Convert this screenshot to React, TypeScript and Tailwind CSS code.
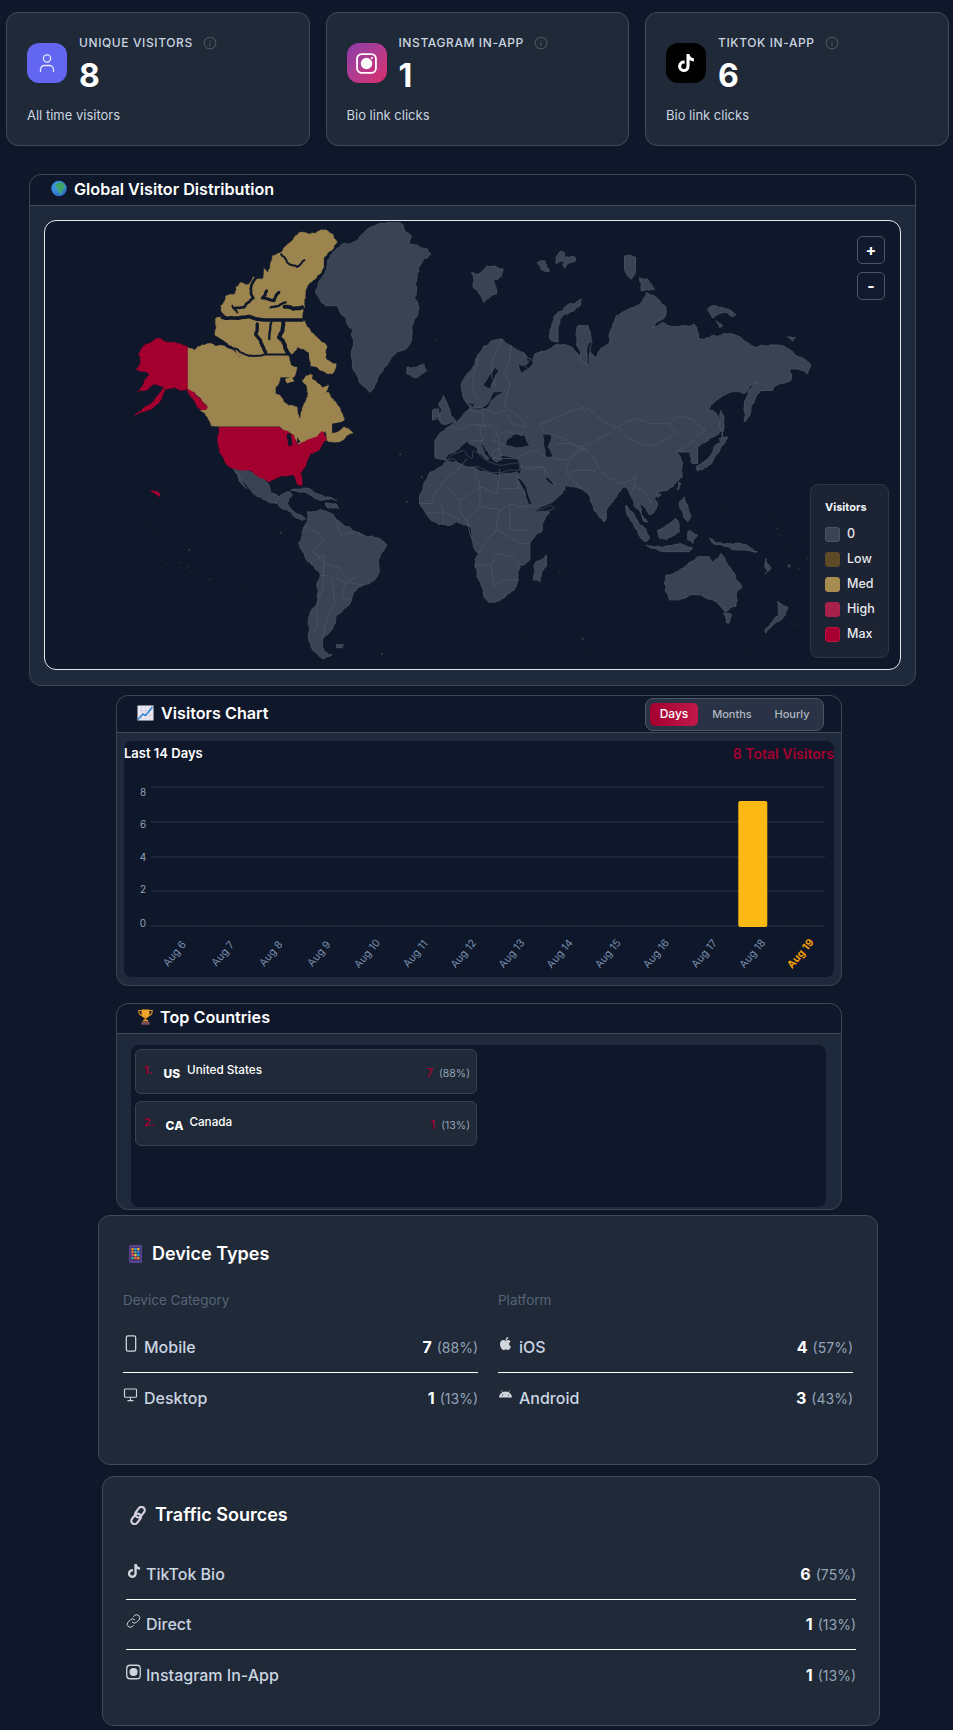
import React from "react";
import { FaApple, FaTiktok } from "react-icons/fa";
import { FaAndroid } from "react-icons/fa6";

const LAND = "#394352";
const LINE = "#4a5565";
const GOLD = "#9c844e";
const RED = "#a3002f";
const BG = "#0f172a";

// Coastlines are subdivided with a repeatable jitter, so they read as coast rather than straight edges.
// Edges that are exactly horizontal or vertical stay straight: those are the map's ruled borders.
function hash(a: number, b: number) {
  const s = Math.sin(a * 12.9898 + b * 78.233) * 43758.5453;
  return s - Math.floor(s);
}
function jitter(x1: number, y1: number, x2: number, y2: number, depth: number, amp: number): number[][] {
  if (depth === 0) return [[x2, y2]];
  const len = Math.hypot(x2 - x1, y2 - y1);
  if (len < 5) return [[x2, y2]];
  const off = (hash(x1 + x2, y1 - y2) - 0.5) * len * amp;
  const mx = (x1 + x2) / 2 - ((y2 - y1) / len) * off;
  const my = (y1 + y2) / 2 + ((x2 - x1) / len) * off;
  return [...jitter(x1, y1, mx, my, depth - 1, amp), ...jitter(mx, my, x2, y2, depth - 1, amp)];
}
function rough(points: string, closed: boolean, amp = 0.28, depth = 4) {
  const pts = points.trim().split(/\s+/).map((p) => p.split(",").map(Number));
  const out: number[][] = [pts[0]];
  const n = closed ? pts.length : pts.length - 1;
  for (let i = 0; i < n; i++) {
    const [x1, y1] = pts[i];
    const [x2, y2] = pts[(i + 1) % pts.length];
    if (x1 === x2 || y1 === y2) out.push([x2, y2]);
    else out.push(...jitter(x1, y1, x2, y2, depth, amp));
  }
  return out.map((p) => `${p[0].toFixed(1)},${p[1].toFixed(1)}`).join(" ");
}

const land = [
  "1070,35 1110,35 1145,75 1135,100 1190,112 1202,130 1165,170 1155,220 1165,300 1145,350 1140,400 1090,435 1050,490 1020,545 990,520 965,470 970,400 945,320 920,285 885,285 855,240 875,200 890,150 935,100 985,85 1005,60",
  "1130,470 1180,460 1190,480 1160,502 1130,490",
  "1325,185 1345,190 1370,165 1420,175 1415,195 1390,210 1400,250 1360,275 1330,230",
  "1240,555 1255,590 1278,632 1240,642 1225,625 1235,600 1225,580",
  "1207,600 1225,595 1228,620 1207,628",
  "605,775 660,785 700,805 715,825 720,850 745,860 775,845 785,855 770,880 790,905 825,925 815,930 800,925 770,900 740,880 700,868 660,840 625,800",
  "612,780 630,805 648,835 625,812",
  "830,905 870,898 915,925 975,965 1010,980 1070,1005 1050,1040 1045,1090 1000,1125 965,1165 920,1215 905,1260 875,1290 880,1325 905,1335 875,1347 845,1320 838,1260 860,1180 870,1095 840,1060 805,1000 820,950",
  "780,840 830,835 880,860 920,872 880,870 835,852",
  "885,878 915,880 925,895 890,892",
  "918,1305 940,1305 935,1315 918,1313",
  "1168,860 1180,820 1215,780 1250,752 1310,745 1330,770 1370,785 1440,790 1462,785 1470,820 1505,885 1515,905 1560,905 1535,965 1500,1000 1500,1050 1470,1065 1465,1110 1420,1165 1375,1177 1355,1130 1335,1070 1345,1030 1325,985 1320,950 1280,935 1225,943 1185,905 1168,880",
  "1550,1035 1550,1070 1530,1115 1510,1110 1515,1060",
];

const landRight = [
  "85,430 120,395 155,385 185,405 220,425 240,445 230,462 205,465 215,490 250,460 255,430 290,420 345,400 375,420 395,455 410,460 425,430 440,440 480,395 490,340 500,315 560,285 590,245 615,255 650,290 640,325 605,355 640,335 700,345 735,340 750,385 790,375 850,370 880,385 915,410 960,405 1010,410 1050,440 1085,465 1075,490 1045,475 1020,475 1025,510 970,540 935,540 905,590 888,635 885,590 895,555 930,515 905,525 885,550 820,555 778,595 810,625 815,660 795,680 770,695 745,710 745,760 728,760 722,725 680,725 700,760 695,780 700,800 670,830 630,845 615,865 625,885 600,915 590,895 570,880 575,905 595,935 585,935 560,895 552,870 540,850 525,830 510,845 470,905 465,935 445,915 415,850 390,835 345,825 345,838 320,865 255,900 225,850 200,805 212,770 205,745 175,738 130,745 128,725 150,715 155,750 140,755 115,725 90,695 105,735 118,745 108,752 70,705 50,690 20,718 -15,750 -45,742 -45,695 -7,650 30,625 55,600 60,590 45,570 33,530 50,490",
  "395,265 392,285 345,310 325,350 325,395 305,390 300,360 320,310 350,285",
  "525,135 558,138 558,175 545,205 525,175",
  "570,200 595,205 615,235 575,240",
  "262,155 285,150 292,165 275,170",
  "270,172 298,175 298,182 282,180",
  "318,140 335,120 345,125 340,150 320,160",
  "345,140 375,138 378,150 345,172 340,160",
  "385,345 415,345 425,390 410,460 395,455 382,390",
  "775,295 790,285 830,295 860,312 850,318 825,305 800,315 790,322",
  "800,330 820,345 810,350",
  "815,600 825,650 818,685 810,650",
  "805,700 818,700 805,730 790,752 745,782 740,770 785,735",
  "810,685 835,680 820,705",
  "650,1095 700,1075 745,1040 780,1040 790,1060 815,1030 850,1085 878,1130 860,1190 830,1205 790,1170 745,1155 690,1170 660,1170 645,1120",
  "822,1210 848,1215 840,1240 830,1238",
  "985,1175 1018,1195 990,1235 950,1270 948,1258 990,1215",
  "690,875 705,860 725,920 715,935 700,905",
  "625,960 680,925 690,965 650,990 630,985",
  "530,885 560,925 600,985 590,995 555,950",
  "590,1005 640,1012 730,1015 720,1025 640,1025",
  "720,960 745,975 730,1000 715,990",
  "780,985 875,1000 925,1025 890,1020 860,1020 800,1005",
  "458,912 470,925 462,935",
  "688,815 695,822 685,840",
  "622,850 635,852 625,862",
  "1015,378 1040,380 1030,392",
  "950,1045 965,1075 955,1085",
];

const water = [
  "100,525 135,470 147,480 120,535",
  "66,592 100,590 130,545 165,538 125,570 110,595 66,600",
  "50,575 75,582 66,592",
  "170,690 195,670 225,675 240,708 190,710 165,705",
  "278,675 305,670 295,710 310,740 288,742 282,705",
  "200,805 210,805 248,885 235,880",
  "285,795 320,825 305,822 290,810",
  "255,905 300,885 315,895 265,905",
  "65,745 70,720 100,745 130,760 155,765 208,755 208,780 160,785 110,782 70,770 30,760 10,745 -15,752 20,728 40,720",
  "205,460 235,475 215,490",
  "220,435 245,445 235,455",
  "418,395 428,395 420,460 412,460",
];

const borders = [
  "-5,650 40,655 60,640 90,645 100,690 60,690",
  "55,600 90,590 130,610 165,600 185,640 230,650 215,670 165,665 130,690",
  "60,640 130,655 150,700 145,720",
  "85,430 70,490 65,530 85,565",
  "155,385 125,470 135,530",
  "185,405 165,480 180,520 165,590 205,620 235,650",
  "60,600 100,610 105,660",
  "270,640 350,610 400,590 430,605 460,630 500,650 560,625 600,640 660,640 690,615 730,625 770,660 740,680 720,700 680,725",
  "500,650 530,680 590,705 630,700 680,665 660,640",
  "270,640 290,670 330,680 400,710 460,680 500,650",
  "310,740 350,750 395,715 430,735 450,780 510,820 560,800 550,840",
  "320,700 360,700 410,715 360,745 350,790 400,835",
  "210,770 280,770 285,795",
  "130,745 205,745 255,720 275,730 290,740",
  "225,780 280,770 320,825",
  "440,780 400,780 355,790",
  "540,850 560,830 590,850 605,880",
  "90,650 125,640 150,665",
  "125,690 165,705",
];

const bordersLeft = [
  "1168,880 1205,880 1235,820 1310,745",
  "1230,820 1290,870 1350,830 1340,800 1330,770",
  "1290,870 1285,895 1320,950",
  "1350,830 1400,850 1410,775",
  "1410,835 1460,835 1470,820",
  "1350,830 1350,890 1310,920 1325,985",
  "1350,890 1410,900 1440,880 1500,890",
  "1410,900 1400,960 1345,1030",
  "1400,960 1470,1000 1500,1000",
  "1335,1065 1385,1065 1390,1130 1420,1110 1465,1110",
  "1385,1065 1400,1030 1450,1040 1470,1065",
  "1440,880 1440,960 1500,960",
  "1190,910 1240,905 1290,930",
  "1235,880 1240,940",
  "820,950 860,965 880,990 850,1025 870,1040",
  "915,925 930,975 975,965 1000,975",
  "850,1025 880,1060 925,1070 960,1115 1000,1125",
  "880,1060 880,1100 860,1180 850,1270",
  "925,1070 915,1100 945,1120 935,1170 965,1165",
  "945,1120 985,1100",
  "840,1060 880,1035 875,1090",
  "870,1095 905,1100 915,1180 890,1220 875,1290",
  "720,850 745,860 735,880",
  "1225,625 1207,628",
  "1215,695 1215,740",
];

const islands = [
  [360, 945, 1.5],[375, 958, 1.5],[385, 990, 1],[405, 1030, 1],[475, 1020, 3],[410, 1062, 1.5],[445, 1058, 2],[470, 1070, 2],[490, 1075, 1.5],[480, 1085, 1.5],[360, 1088, 1],[538, 1108, 2],[645, 1125, 1],[820, 1168, 1],[750, 968, 3],[1130, 875, 3],[1110, 732, 3],[1175, 800, 3],[1185, 1010, 1],[1235, 1058, 1],[1285, 1335, 1],[1055, 1332, 3],[1218, 388, 2],[1375, 322, 1],
];
const islandsRight = [
  [830, 860, 1],[828, 885, 1.5],[965, 925, 1.5],[985, 955, 2],[995, 975, 1.5],[1020, 1068, 5],[1050, 1075, 2],[950, 1090, 3],[1045, 1243, 2],[400, 1287, 3],[330, 1085, 2],[222, 1267, 1],[947, 1298, 1],[424, 1322, 1],[905, 1335, 1],[1075, 985, 1.5],[1075, 1045, 2],[1010, 1010, 1.5],[1035, 1055, 1.5],[975, 930, 1],
];

const goldShapes = [
  "570,285 585,255 612,250 615,230 630,215 650,222 668,198 695,205 700,172 712,185 718,160 725,135 750,125 770,100 790,80 805,65 870,57 905,68 920,92 905,118 880,140 880,170 860,195 838,215 825,250 822,290 815,322 840,360 865,385 890,410 885,440 918,460 905,490 870,480 835,465 835,425 800,410 790,425 775,432 740,430 700,425 680,436 650,432 622,438 600,405 552,372 555,322 590,320",
  "470,410 490,418 540,398 552,405 585,408 615,425 622,438 650,432 680,436 700,425 740,430 775,432 780,460 800,470 790,500 750,500 735,530 735,550 775,585 800,590 810,625 815,600 825,575 830,540 815,510 840,490 870,510 895,525 880,550 895,545 910,570 942,628 915,640 905,660 940,650 968,668 925,695 888,690 885,663 870,675 845,690 805,705 790,675 760,660 745,648 565,648 540,645 530,620 508,598 525,598 530,590 510,565 490,545 470,535",
  "765,505 785,495 790,512 770,518",
];
const channels: [string, number][] = [
  ["752,130 770,155 800,168 822,148", 6],
  ["762,288 815,290", 12],
  ["680,195 660,235 668,262 640,290 612,292", 8],
  ["708,240 695,262 730,270 745,245", 9],
  ["720,290 765,275", 7],
  ["575,320 610,322 700,328 815,328", 11],
  ["605,285 620,305", 6],
  ["680,340 675,370 695,405 705,425", 10],
  ["722,335 716,385", 7],
  ["758,335 745,380 775,430", 12],
  ["556,395 600,412 640,430 700,432 775,432", 6],
];
const canadaWater = [
  "810,425 830,425 840,470 815,482 800,465",
  "850,490 895,525 875,530 845,505",
  "905,640 940,632 935,655 905,668",
  "770,680 782,670 788,705 772,705",
  "800,680 810,695 800,700",
];
const redShapes = [
  "378,382 400,392 440,398 470,408 470,535 455,540 430,530 405,535 395,555 370,590 335,605 308,618 340,590 370,570 385,550 400,530 370,520 345,540 318,545 340,510 355,490 315,475 330,455 322,430 345,400",
  "470,535 490,545 510,565 530,590 525,598 508,598 490,570 470,545",
  "565,650 745,650 760,660 790,675 800,705 830,690 860,680 875,662 888,690 870,715 840,730 832,750 825,770 810,790 815,825 800,822 790,795 750,798 715,815 700,805 680,798 660,780 610,775 585,760 568,730 560,680",
  "358,840 375,842 388,852 385,860 370,848",
];

function WorldMap() {
  return (
    <svg viewBox="42 30 2571 1348" className="block h-full w-full" aria-hidden="true">
      <g fill={LAND} stroke={LINE} strokeWidth="2.5" strokeLinejoin="round">
        {land.map((p, i) => <polygon key={i} points={rough(p, true)} />)}
        <g transform="translate(1260 0)">
          {landRight.map((p, i) => <polygon key={i} points={rough(p, true)} />)}
        </g>
      </g>
      <g fill={BG} stroke={LINE} strokeWidth="2" transform="translate(1260 0)">
        {water.map((p, i) => <polygon key={i} points={rough(p, true, 0.2, 3)} />)}
      </g>
      <g fill="none" stroke={LINE} strokeWidth="2.5" strokeLinejoin="round">
        <g transform="translate(1260 0)">
          {borders.map((p, i) => <polyline key={i} points={rough(p, false, 0.16, 3)} />)}
        </g>
        {bordersLeft.map((p, i) => <polyline key={i} points={rough(p, false, 0.16, 3)} />)}
      </g>
      <g fill={LAND}>
        {islands.map(([x, y, r], i) => <circle key={i} cx={x} cy={y} r={r} />)}
        <g transform="translate(1260 0)">
          {islandsRight.map(([x, y, r], i) => <circle key={i} cx={x} cy={y} r={r} />)}
        </g>
      </g>
      <g fill={GOLD} stroke={GOLD} strokeWidth="1" strokeLinejoin="round">
        {goldShapes.map((p, i) => <polygon key={i} points={rough(p, true)} />)}
      </g>
      <g fill="none" stroke={BG} strokeLinejoin="round" strokeLinecap="round">
        {channels.map(([p, w], i) => <polyline key={i} points={rough(p, false, 0.22, 3)} strokeWidth={w} />)}
      </g>
      <g fill={BG}>
        {canadaWater.map((p, i) => <polygon key={i} points={rough(p, true, 0.2, 3)} />)}
      </g>
      <g fill={RED} stroke={RED} strokeWidth="1" strokeLinejoin="round">
        {redShapes.map((p, i) => <polygon key={i} points={rough(p, true, 0.22, 4)} />)}
      </g>
      <g fill={BG}>
        <polygon points="768,672 780,668 786,705 774,708" />
      </g>
    </svg>
  );
}

function GlobeEmoji() {
  return (
    <svg viewBox="0 0 17 17" className="h-[17px] w-[16px] shrink-0">
      <defs>
        <radialGradient id="gl" cx="0.4" cy="0.35" r="0.8">
          <stop offset="0" stopColor="#43a6e8" />
          <stop offset="1" stopColor="#2a5fc0" />
        </radialGradient>
      </defs>
      <circle cx="8.5" cy="8.5" r="8.3" fill="url(#gl)" />
      <path d="M7 2.500l5-.5 3 3.500-.5 3-2 1-.5 3-2.500 2.500-1-3-1.500-1.500.5-2-2.500-1-.5-2.500z" fill="#3fa66b" />
    </svg>
  );
}
function ChartEmoji() {
  return (
    <svg viewBox="0 0 17 16" className="h-[16px] w-[17px] shrink-0">
      <rect x="0.5" y="0.5" width="16" height="15" fill="#ece8f2" />
      <path d="M4.500.5v15M8.500.5v15M12.500.5v15M.5 5.500h16M.5 10.500h16" stroke="#cfc8de" strokeWidth="0.6" />
      <path d="M1 14.500l5-5.500 2.500 1.500L15.500 2" stroke="#2f86d6" strokeWidth="1.500" fill="none" />
    </svg>
  );
}
function TrophyEmoji() {
  return (
    <svg viewBox="0 0 15 16" className="h-[16px] w-[15px] shrink-0">
      <path d="M3.500.5h8v4.500a4 4 0 0 1-8 0z" fill="#f0a52a" />
      <path d="M3.500 1.500H.8c0 3 1 4.700 3.200 5M11.500 1.500h2.700c0 3-1 4.700-3.200 5" fill="none" stroke="#e39a22" strokeWidth="1.100" />
      <rect x="6.500" y="8.500" width="2" height="3" fill="#d98b1f" />
      <rect x="5" y="11" width="5" height="1.400" fill="#e8a22c" />
      <rect x="3.500" y="12.400" width="8" height="3.300" rx="0.5" fill="#7d4f55" />
    </svg>
  );
}
function PhoneEmoji() {
  const cells = ["#f59e0b", "#22a7e0", "#f2c037", "#ef6b3a", "#36b37e", "#2d8fe0", "#e74c6f", "#f2c037", "#22a7e0", "#36b37e", "#ef6b3a", "#f59e0b"];
  return (
    <svg viewBox="0 0 13 18" className="ml-[6px] mr-[3px] h-[18px] w-[13px] shrink-0">
      <rect x="0" y="0" width="13" height="18" rx="1.500" fill="#5b4494" />
      <rect x="1.500" y="2" width="10" height="13.500" fill="#3a2c66" />
      {cells.map((c, i) => (
        <rect key={i} x={2.4 + (i % 3) * 2.9} y={2.9 + Math.floor(i / 3) * 3} width="2.300" height="2.400" fill={c} />
      ))}
    </svg>
  );
}
function LinkEmoji() {
  return (
    <svg viewBox="0 0 18 19" className="ml-[3px] mr-[1px] h-[19px] w-[18px] shrink-0" fill="none" stroke="#d6cfe0" strokeWidth="2.200">
      <rect x="7.800" y="0.400" width="6.500" height="11.500" rx="3.200" transform="rotate(38 11 6)" />
      <rect x="3.800" y="7.100" width="6.500" height="11.500" rx="3.200" transform="rotate(38 7 13)" />
    </svg>
  );
}

function Info() {
  return (
    <svg viewBox="0 0 24 24" className="h-[14px] w-[14px]" fill="none" stroke="#4b5563" strokeWidth="1.8" strokeLinecap="round">
      <circle cx="12" cy="12" r="10" />
      <path d="M12 11v6M12 7.500v.2" />
    </svg>
  );
}

function UserIcon() {
  return (
    <svg viewBox="0 0 24 24" className="h-[24px] w-[24px]" fill="none" stroke="#e5e9ff" strokeWidth="1.300" strokeLinecap="round">
      <circle cx="12" cy="7.500" r="3.600" />
      <path d="M5.500 20.500v-2a4 4 0 0 1 4-4h5a4 4 0 0 1 4 4v2" />
    </svg>
  );
}

function InstaGlyph({ size, dot = true }: { size: string; dot?: boolean }) {
  return (
    <svg viewBox="2 2 20 20" className={size} fill="none" stroke="currentColor" strokeWidth="1.700">
      <rect x="3" y="3" width="18" height="18" rx="4.500" />
      <circle cx="12" cy="12" r="4.600" fill="currentColor" />
      {dot && <circle cx="17.200" cy="6.800" r="1" fill="currentColor" stroke="none" />}
    </svg>
  );
}

function StatCard({ title, value, sub, icon, iconClass }: { title: string; value: string; sub: string; icon: React.ReactNode; iconClass: string }) {
  return (
    <div className="h-[134px] w-[303.5px] rounded-xl border border-[#3f4a5a] bg-[#1f2937] px-[20px] pt-[21px]">
      <div className="flex items-start gap-3">
        <div className={`mt-[9px] flex h-10 w-10 items-center justify-center rounded-xl text-white ${iconClass}`}>{icon}</div>
        <div>
          <div className="flex h-[18px] items-center gap-[10px] text-[12px] font-medium uppercase leading-[18px] tracking-[0.05em] text-[#cbd5e1]">
            {title}
            <Info />
          </div>
          <div className="mt-[2px] text-[32px] font-bold leading-[44px] text-white">{value}</div>
        </div>
      </div>
      <div className="mt-[8px] text-[13px] leading-[18px] text-[#cbd5e1]">{sub}</div>
    </div>
  );
}

function PanelHeader({ emoji, title, children, h, pad }: { emoji: React.ReactNode; title: string; children?: React.ReactNode; h: string; pad: string }) {
  return (
    <div className={`flex items-center justify-between rounded-t-xl border-b border-[#3f4a5a] bg-[#0f172a] pr-[17px] ${h} ${pad}`}>
      <div className="-mt-[2px] flex items-center gap-[7px] text-[16.2px] font-semibold text-white">
        {emoji}
        {title}
      </div>
      {children}
    </div>
  );
}

const legend = [
  ["0", "bg-[#3b4454] border-[#4b5563]"],
  ["Low", "bg-[#5c4a28] border-[#5c4a28]"],
  ["Med", "bg-[#a68c50] border-[#a68c50]"],
  ["High", "bg-[#a8214a] border-[#a8214a]"],
  ["Max", "bg-[#a60033] border-[#c01040]"],
];

const days = [6, 7, 8, 9, 10, 11, 12, 13, 14, 15, 16, 17, 18, 19];

function Chart() {
  const grid = [21, 56, 91, 125, 160];
  const labels: [string, number][] = [["8", 26], ["6", 58], ["4", 91], ["2", 123], ["0", 157]];
  const slot = (701 - 27) / 14;
  return (
    <svg width="710" height="210" viewBox="0 0 710 210" className="block">
      {grid.map((y) => <line key={y} x1="27" x2="701" y1={y} y2={y} stroke="#2c3647" strokeWidth="1" />)}
      {labels.map(([t, y]) => (
        <text key={t} x="19" y={y + 3.5} textAnchor="middle" fontSize="10" fill="#94a3b8" fontFamily="Inter">{t}</text>
      ))}
      {days.map((d, i) => {
        const cx = 27 + slot * (i + 0.5);
        const last = d === 19;
        return (
          <g key={d}>
            {d === 18 ? (
              <rect x={cx - 14.5} y="35" width="29" height="126" rx="2" fill="#fdb913" />
            ) : (
              <rect x={cx - 14.5} y="159" width="29" height="1" fill="#1f2937" />
            )}
            <text
              x={cx}
              y="191"
              textAnchor="middle"
              fontSize="10.5"
              fontFamily="Inter"
              fontWeight={last ? 700 : 400}
              fill={last ? "#f59e0b" : "#7890ae"}
              transform={`rotate(-50 ${cx} 188)`}
            >
              Aug {d}
            </text>
          </g>
        );
      })}
    </svg>
  );
}

function CountryRow({ rank, code, name, count, pct, nameGap }: { rank: string; code: string; name: string; count: string; pct: string; nameGap: string }) {
  return (
    <div className="flex h-[45px] items-center justify-between rounded-md border border-[#374151] bg-[#1f2937] pl-[8px] pr-[6px]">
      <div className="flex items-center">
        <span className="-mt-[2px] text-[11px] font-bold text-[#a3002f]">{rank}</span>
        <span className="ml-[11px] mt-[4px] text-[12px] font-extrabold text-white">{code}</span>
        <span className={`-mt-[2px] text-[11.700px] font-medium text-white ${nameGap}`}>{name}</span>
      </div>
      <div className="mt-[2px] flex items-baseline gap-[6px]">
        <span className="text-[12px] font-medium text-[#a3002f]">{count}</span>
        <span className="text-[10.500px] text-[#94a3b8]">{pct}</span>
      </div>
    </div>
  );
}

function StatRow({ icon, label, value, pct, divider, gap = "gap-[6px]" }: { icon: React.ReactNode; label: string; value: string; pct: string; divider?: boolean; gap?: string }) {
  return (
    <div className={`flex h-[50.500px] items-center justify-between ${divider ? "border-b border-white" : ""}`}>
      <div className={`flex items-center text-[16px] font-medium text-[#cbd5e1] ${gap}`}>
        <span className="-mt-[6px] flex w-[15px] justify-center text-[#d1d5db]">{icon}</span>
        {label}
      </div>
      <div className="flex items-baseline gap-[5px]">
        <span className="text-[16px] font-bold text-white">{value}</span>
        <span className="text-[14px] text-[#94a3b8]">{pct}</span>
      </div>
    </div>
  );
}

function SectionTitle({ emoji, title }: { emoji: React.ReactNode; title: string }) {
  return (
    <div className="flex items-center gap-[7px] text-[18px] font-semibold leading-[28px] text-white">
      {emoji}
      {title}
    </div>
  );
}

export default function App() {
  return (
    <div className="min-h-[1730px] w-[953px] overflow-hidden bg-[#0f172a] pt-[12px] font-[Inter,'Noto_Sans',sans-serif]">
      <div className="flex gap-[16px] pl-[6px]">
        <StatCard title="Unique Visitors" value="8" sub="All time visitors" iconClass="bg-[#6366f1]" icon={<UserIcon />} />
        <StatCard title="Instagram In-App" value="1" sub="Bio link clicks" iconClass="bg-gradient-to-br from-[#8b3aab] to-[#dc2a6c]" icon={<InstaGlyph size="h-[21px] w-[21px]" />} />
        <StatCard title="TikTok In-App" value="6" sub="Bio link clicks" iconClass="bg-black" icon={<FaTiktok className="h-[18px] w-[18px]" />} />
      </div>

      <section className="ml-[29px] mt-[28px] h-[512px] w-[887px] rounded-xl border border-[#3a4556] bg-[#1e293b]">
        <PanelHeader emoji={<GlobeEmoji />} title="Global Visitor Distribution" h="h-[31px]" pad="pl-[21px]" />
        <div className="relative mx-[14px] mt-[14px] h-[450px] overflow-hidden rounded-xl border border-[#e5e7eb] bg-[#0f172a]">
          <WorldMap />
          <div className="absolute right-[15px] top-[15px] flex flex-col gap-[8px]">
            <div className="flex h-[28px] w-[28px] items-center justify-center rounded-[5px] border border-[#4b5563] bg-[#111a2e] text-[16px] font-bold leading-none text-white">+</div>
            <div className="flex h-[28px] w-[28px] items-center justify-center rounded-[5px] border border-[#4b5563] bg-[#111a2e] text-[16px] font-bold leading-none text-white">-</div>
          </div>
          <div className="absolute bottom-[11px] right-[11px] h-[174px] w-[79px] rounded-lg border border-[#2d3748] bg-[#1c2333] pl-[14px] pt-[14px]">
            <div className="text-[11px] font-bold leading-[16px] text-[#f1f5f9]">Visitors</div>
            <div className="mt-[12px] flex flex-col gap-[10px]">
              {legend.map(([label, cls]) => (
                <div key={label} className="flex h-[15px] items-center gap-[7px] text-[12.500px] font-medium text-[#e5e7eb]">
                  <span className={`h-[15px] w-[15px] rounded-[3px] border ${cls}`} />
                  {label}
                </div>
              ))}
            </div>
          </div>
        </div>
      </section>

      <section className="ml-[116px] mt-[9px] h-[291px] w-[726px] rounded-xl border border-[#3a4556] bg-[#1e293b]">
        <PanelHeader emoji={<ChartEmoji />} title="Visitors Chart" h="h-[37px]" pad="pl-[20px]">
          <div className="flex h-[33px] w-[179px] items-center rounded-lg border border-[#4b5563] bg-[#2a3345] pl-[4px] text-[11px] font-medium text-[#b0b6c0]">
            <span className="flex h-[23px] w-[48px] items-center justify-center rounded-[5px] bg-gradient-to-r from-[#a3002f] to-[#c0184b] text-[12px] text-white">Days</span>
            <span className="ml-[4px] flex h-[23px] w-[60px] items-center justify-center">Months</span>
            <span className="flex h-[23px] w-[60px] items-center justify-center">Hourly</span>
          </div>
        </PanelHeader>
        <div className="mx-[7px] mt-[8px] h-[236px] w-[710px] rounded-lg bg-[#0f172a]">
          <div className="flex h-[25px] items-center justify-between">
            <span className="text-[13px] font-semibold text-white">Last 14 Days</span>
            <span className="text-[14px] font-semibold text-[#a3002f]">8 Total Visitors</span>
          </div>
          <Chart />
        </div>
      </section>

      <section className="ml-[116px] mt-[17px] h-[207px] w-[726px] rounded-xl border border-[#3a4556] bg-[#1e293b]">
        <PanelHeader emoji={<TrophyEmoji />} title="Top Countries" h="h-[30px]" pad="pl-[21px]" />
        <div className="ml-[14px] mt-[11px] h-[162px] w-[695px] rounded-lg bg-[#0f172a] p-[4px]">
          <div className="grid w-[342px] gap-[7px]">
            <CountryRow rank="1." code="US" name="United States" count="7" pct="(88%)" nameGap="ml-[7px]" />
            <CountryRow rank="2." code="CA" name="Canada" count="1" pct="(13%)" nameGap="ml-[6px]" />
          </div>
        </div>
      </section>

      <section className="ml-[98px] mt-[5px] h-[250px] w-[780px] rounded-xl border border-[#3f4a5a] bg-[#1f2937] px-[24px] pt-[24px]">
        <SectionTitle emoji={<PhoneEmoji />} title="Device Types" />
        <div className="mt-[22px] grid grid-cols-2 gap-[20px]">
          <div>
            <div className="text-[13.500px] leading-[20px] text-[#566378]">Device Category</div>
            <div className="mt-[12px]">
              <StatRow divider label="Mobile" value="7" pct="(88%)" icon={<svg viewBox="0 0 16 20" className="h-[17px] w-[14px]" fill="none" stroke="currentColor" strokeWidth="1.5"><rect x="2.5" y="1" width="11" height="18" rx="2" /></svg>} />
              <StatRow label="Desktop" value="1" pct="(13%)" icon={<svg viewBox="0 0 20 20" className="h-[16px] w-[16px]" fill="none" stroke="currentColor" strokeWidth="1.5"><rect x="2" y="2" width="16" height="11" rx="1" /><path d="M10 13v4M6 17.500h8" /></svg>} />
            </div>
          </div>
          <div>
            <div className="text-[13.500px] leading-[20px] text-[#566378]">Platform</div>
            <div className="mt-[12px]">
              <StatRow divider label="iOS" value="4" pct="(57%)" icon={<FaApple className="h-[15px] w-[15px]" />} />
              <StatRow label="Android" value="3" pct="(43%)" icon={<FaAndroid className="h-[13px] w-[13px]" />} />
            </div>
          </div>
        </div>
      </section>

      <section className="ml-[102px] mt-[11px] h-[250px] w-[778px] rounded-xl border border-[#3f4a5a] bg-[#1f2937] px-[23px] pt-[24px]">
        <SectionTitle emoji={<LinkEmoji />} title="Traffic Sources" />
        <div className="mt-[20px]">
          <StatRow divider gap="gap-[5px]" label="TikTok Bio" value="6" pct="(75%)" icon={<FaTiktok className="h-[14px] w-[14px]" />} />
          <StatRow divider gap="gap-[5px]" label="Direct" value="1" pct="(13%)" icon={<svg viewBox="0 0 24 24" className="h-[16px] w-[16px]" fill="none" stroke="currentColor" strokeWidth="1.6" strokeLinecap="round"><path d="M10 14a5 5 0 0 0 7 0l4-4a5 5 0 0 0-7-7l-2 2" /><path d="M14 10a5 5 0 0 0-7 0l-4 4a5 5 0 0 0 7 7l2-2" /></svg>} />
          <StatRow gap="gap-[5px]" label="Instagram In-App" value="1" pct="(13%)" icon={<InstaGlyph dot={false} size="h-[16px] w-[15px]" />} />
        </div>
      </section>
    </div>
  );
}
